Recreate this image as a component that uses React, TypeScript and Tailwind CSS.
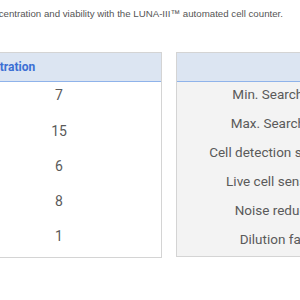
import React from 'react';

const concentrations = ['7', '15', '6', '8', '1'];
const settings = [
  'Min. Search Size',
  'Max. Search Size',
  'Cell detection sensitivity',
  'Live cell sensitivity',
  'Noise reduction',
  'Dilution factor',
];

export default function App() {
  return (
    <div className="w-[300px] h-[300px] overflow-hidden bg-white font-['Roboto',sans-serif]">
      <div className="ml-[-70px] w-[640px]">
        {/* intro line */}
        <div className="w-[353px] pt-[7px] flex justify-end">
          <p className="shrink-0 whitespace-nowrap text-[9.7px] leading-[14px] text-[#555] font-['Liberation_Sans',Arial,sans-serif]">
            Determine cell concentration and viability with the LUNA-III™ automated cell counter.
          </p>
        </div>

        <div className="mt-[31px] flex items-start gap-[14px]">
          {/* concentration table */}
          <div className="w-[232px] border border-[#d4d4d4] bg-white">
            <div className="h-[29px] flex items-center bg-[#dce5f2] border-b border-[#8fb3ea]">
              <span className="ml-[28px] text-[12px] font-bold text-[#3b6fd4]">Concentration</span>
            </div>
            {concentrations.map((v, i) => (
              <div
                key={v}
                className={
                  i === 0
                    ? 'h-[35px] pb-[8px] grid grid-cols-[26px_1fr] items-center text-[14px] text-[#5a5a5a]'
                    : 'h-[35px] pb-[6px] grid grid-cols-[26px_1fr] items-center text-[14px] text-[#5a5a5a]'
                }
              >
                <span />
                <span className="text-center">{v}</span>
              </div>
            ))}
          </div>

          {/* settings table */}
          <div className="w-[240px] border border-[#d4d4d4] bg-[#f3f3f3]">
            <div className="h-[29px] bg-[#dce5f2] border-b border-[#8fb3ea]" />
            {settings.map((s) => (
              <div key={s} className="h-[29px] pb-[5px] grid grid-cols-[210px_1fr] items-center text-[13.5px] text-[#5a5a5a]">
                <span className="text-center whitespace-nowrap">{s}</span>
                <span />
              </div>
            ))}
          </div>
        </div>
      </div>
    </div>
  );
}
